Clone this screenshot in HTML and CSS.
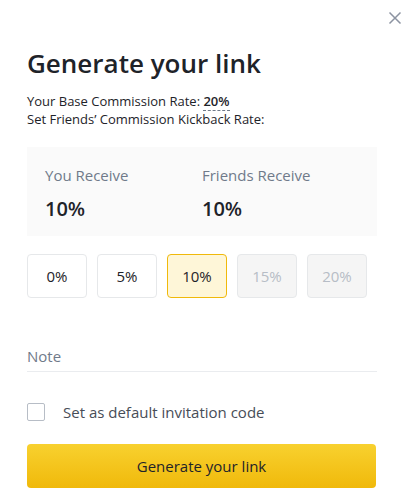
FILE: index.html
```html
<!DOCTYPE html>
<html>
<head>
<meta charset="utf-8">
<link rel="stylesheet" href="styles.css">
</head>
<body>
<div class="modal">
  <button class="close" aria-label="Close">
    <svg width="14" height="14" viewBox="0 0 14 14"><path d="M1.5 1.5L12.5 12.5M12.5 1.5L1.5 12.5" stroke="#8C93A1" stroke-width="1.5" fill="none"/></svg>
  </button>
  <h1 class="title">Generate your link</h1>
  <div class="rate">Your Base Commission Rate: <span class="rate-val">20%</span></div>
  <div class="rate">Set Friends’ Commission Kickback Rate:</div>
  <div class="summary">
    <div class="sum-col">
      <div class="sum-label">You Receive</div>
      <div class="sum-val">10%</div>
    </div>
    <div class="sum-col">
      <div class="sum-label">Friends Receive</div>
      <div class="sum-val">10%</div>
    </div>
  </div>
  <div class="options">
    <div class="opt">0%</div>
    <div class="opt">5%</div>
    <div class="opt opt-active">10%</div>
    <div class="opt opt-disabled">15%</div>
    <div class="opt opt-disabled">20%</div>
  </div>
  <div class="note">Note</div>
  <label class="check-row">
    <span class="checkbox"></span>
    <span class="check-label">Set as default invitation code</span>
  </label>
  <button class="primary">Generate your link</button>
</div>
</body>
</html>
```
FILE: styles.css
```css
* { box-sizing: border-box; }
html, body { margin: 0; padding: 0; background: #fff; }
body { font-family: "Open Sans", "Noto Sans", sans-serif; color: #1E2329; }
.modal { position: relative; width: 410px; height: 503px; padding: 46px 33px 0 27px; }
.close { position: absolute; top: 11px; right: 8px; width: 14px; height: 14px; padding: 0; border: 0; background: none; }
.close svg { display: block; }
.title { margin: 0 0 12px; font-size: 26px; line-height: 34px; font-weight: 600; color: #1E2329; }
.rate { font-size: 13px; line-height: 18px; color: #1E2329; }
.rate-val { font-weight: 600; border-bottom: 1px dashed #707A8A; }
.summary { margin-top: 19px; background: #FAFAFA; height: 89px; display: flex; padding: 18px 18px 0; }
.sum-col { width: 157px; }
.sum-label { font-size: 15px; line-height: 20px; color: #707A8A; }
.sum-val { margin-top: 12px; font-size: 20px; line-height: 24px; font-weight: 600; color: #1E2329; }
.options { margin-top: 18px; display: flex; gap: 10px; }
.opt { width: 60px; height: 44px; border: 1px solid #E6E8EA; border-radius: 4px; display: flex; align-items: center; justify-content: center; font-size: 15px; color: #1E2329; }
.opt-active { background: #FEF6D8; border-color: #F0B90B; }
.opt-disabled { background: #F5F5F5; color: #B7BDC6; border-color: #E6E8EA; }
.note { margin-top: 46px; height: 28px; border-bottom: 1px solid #EAECEF; font-size: 15px; line-height: 20px; color: #707A8A; padding-top: 2px; }
.check-row { margin-top: 30px; display: flex; align-items: center; height: 20px; }
.checkbox { width: 18px; height: 18px; border: 1px solid #B7BDC6; border-radius: 2px; }
.check-label { margin-left: 18px; font-size: 15px; color: #474D57; }
.primary { margin-top: 22px; width: 349px; height: 44px; border: 0; border-radius: 4px; background: linear-gradient(180deg, #F8D12F 0%, #F0B90B 100%); font-family: inherit; font-size: 15px; font-weight: 500; color: #1E2329; }
```
